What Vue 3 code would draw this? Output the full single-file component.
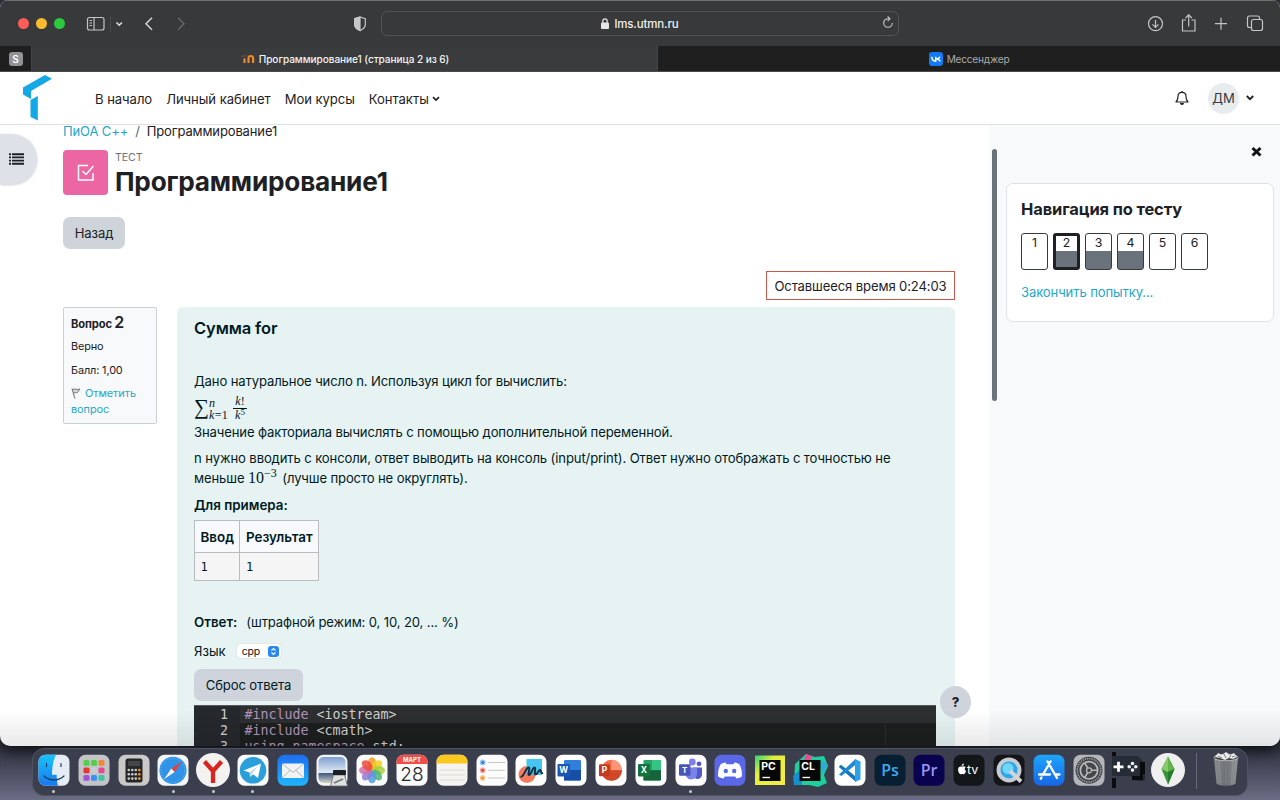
<script setup>
const menu = ['В начало', 'Личный кабинет', 'Мои курсы']
const questions = [
  { n: 1 }, { n: 2, done: true, current: true }, { n: 3, done: true },
  { n: 4, done: true }, { n: 5 }, { n: 6 },
]
const launchpad = ['#4fd04a', '#4fd04a', '#f0883a', '#e5352f', '#c9ccd2', '#e8478f', '#a04fd8', '#3f8ff0', '#3fc3a4']
const petals = ['#f59a23', '#f2d01f', '#a6cf3a', '#4fb37a', '#4f9fe0', '#8b7fd6', '#d46fb0', '#ee4b3a']
const running = ['finder', 'safari', 'yandex', 'telegram', 'teams']
const apps = ['finder', 'launchpad', 'calculator', 'safari', 'yandex', 'telegram', 'mail', 'preview', 'photos',
  'calendar', 'notes', 'reminders', 'freeform', 'word', 'powerpoint', 'excel', 'teams', 'discord', 'pycharm',
  'clion', 'vscode', 'photoshop', 'premiere', 'tv', 'quicktime', 'appstore', 'settings', 'controller', 'sims']
const base = {
  launchpad: '#c3c4c8', calculator: '#c9c9c7', safari: '#f4f5f6', telegram: '#fafafa', mail: 'url(#gMail)',
  photos: '#fbfbfb', calendar: '#fafafa', notes: '#f5f4f0', reminders: '#fcfcfc', freeform: '#fff', word: '#fff',
  powerpoint: '#fff', excel: '#fff', teams: '#fff', discord: '#5a68e8', vscode: '#fff', photoshop: '#071f33',
  premiere: '#08024f', tv: '#131719', quicktime: '#131517', appstore: 'url(#gStore)', settings: '#b4b5b8', preview: '#f3f4f6',
}
</script>

<template>
  <div class="desktop">
    <div class="window">
      <div class="toolbar">
        <div class="lights"><i class="red"></i><i class="yellow"></i><i class="green"></i></div>
        <svg class="bar-svg" width="130" height="24" viewBox="78 11 130 24" fill="none" stroke="#c3c4c5" stroke-width="1.2">
          <rect x="87.500" y="16.500" width="16.500" height="12.500" rx="2" />
          <path d="M94 16.500v12.500M89.500 19.500h2.500M89.500 22h2.500M89.500 24.500h2.500" />
          <path d="M110.500 15v16" stroke="#47494a" />
          <path d="M116.500 21.500l2.700 2.700 2.700-2.700" stroke="#e0e0e0" stroke-width="1.600" />
          <path d="M152 16.800l-6 6 6 6" stroke="#d5d6d6" stroke-width="1.500" />
          <path d="M178 16.800l6 6-6 6" stroke="#626466" stroke-width="1.500" />
        </svg>
        <svg class="shield" width="14" height="16" viewBox="0 0 14 16" fill="none" stroke="#c6c7c8" stroke-width="1.200">
          <path d="M7 1l5.300 1.600v5.900c0 3-2.500 4.800-5.300 6-2.800-1.200-5.300-3-5.300-6V2.600z" />
          <path d="M7 1L1.700 2.600v5.900c0 3 2.500 4.800 5.300 6z" fill="#c6c7c8" />
        </svg>
        <div class="address">
          <div class="host">
            <svg width="8" height="11" viewBox="0 0 8 11"><rect y="4.500" width="8" height="6.500" rx="1" fill="#e5e5e5" /><path d="M1.800 5V3a2.200 2.200 0 014.400 0v2" fill="none" stroke="#e5e5e5" stroke-width="1.200" /></svg>
            <span>lms.utmn.ru</span>
          </div>
          <svg class="reload" width="12" height="13" viewBox="0 0 12 13" fill="none" stroke="#c9caca" stroke-width="1.100"><path d="M7.500 2.700H6A4.300 4.300 0 1010.300 7" /><path d="M5.600.4l2.400 2.300-2.400 2.400" /></svg>
        </div>
        <svg class="tools" width="120" height="24" viewBox="1146 11 120 24" fill="none" stroke="#c3c4c5" stroke-width="1.200">
          <circle cx="1155.500" cy="22.700" r="7" /><path d="M1155.500 19v7M1152.500 23.300l3 3 3-3" />
          <path d="M1186 19h-3.500v11h12.500v-11h-3.500M1188.700 25.500v-11.500M1185.500 17l3.200-3.200 3.200 3.200" />
          <path d="M1215 22.700h12M1221 16.700v12" />
          <rect x="1251.500" y="18.500" width="11" height="11" rx="2" /><path d="M1251 26.500h-1.500a2 2 0 01-2-2v-7.500a2 2 0 012-2h8a2 2 0 012 2v1" />
        </svg>
      </div>

      <div class="tabs">
        <div class="pin"><span>S</span></div>
        <div class="tab active">
          <svg width="15" height="10" viewBox="0 0 15 10" fill="none"><path d="M4.500 9V4.500M8.500 9V4.300a2.300 2.300 0 014.600 0V9" stroke="#ef8a28" stroke-width="2.200" /><path d="M0 2.500L5.500.7l2 1.300-4.500 1.500" fill="#5b4a43" /></svg>
          <span>Программирование1 (страница 2 из 6)</span>
        </div>
        <div class="tab idle">
          <svg width="14" height="14" viewBox="0 0 14 14"><rect width="14" height="14" rx="3" fill="#1479f5" /><path d="M2.700 4.800c.3 3 1.700 4.500 4 4.500V4.800M11 4.800c-.7 1.500-1.800 2.200-3.600 2.200M8.200 7c1.300.2 2.300.9 3.100 2.400" fill="none" stroke="#fff" stroke-width="1.500" /></svg>
          <span>Мессенджер</span>
        </div>
      </div>

      <header class="site">
        <svg class="brand" width="30" height="46" viewBox="0 0 30 46" fill="#14a9e6"><path d="M0 12.500L22 0l7 3.800L8 16v8L0 19.500z" /><path d="M7.500 25L14.800 21v24.500L7.500 42z" /></svg>
        <nav>
          <a v-for="m in menu" :key="m">{{ m }}</a>
          <a>Контакты <svg width="8" height="6" viewBox="0 0 8 6"><path d="M1 1.200l3 2.800 3-2.800" fill="none" stroke="#1d2125" stroke-width="1.700" /></svg></a>
        </nav>
        <svg class="bell" width="14" height="15" viewBox="0 0 14 15"><path d="M7 1.400c2.500 0 4 1.800 4 4 0 3 .8 4.300 2 5.600H1c1.200-1.300 2-2.600 2-5.600 0-2.200 1.500-4 4-4z" fill="none" stroke="#1d2125" stroke-width="1.200" stroke-linejoin="round" /><path d="M7 0v1.500" stroke="#1d2125" stroke-width="1.300" /><path d="M5 12h4a2 2 0 01-4 0z" fill="#1d2125" /></svg>
        <div class="avatar">ДМ</div>
        <svg class="caret" width="8" height="6" viewBox="0 0 8 6"><path d="M.8 1l3.200 3.200L7.200 1" fill="none" stroke="#1d2125" stroke-width="1.800" /></svg>
      </header>

      <div class="page">
        <main>
          <div class="crumbs"><a>ПиОА C++</a><i>/</i><span>Программирование1</span></div>
          <div class="title">
            <div class="quiz">
              <svg width="20" height="20" viewBox="0 0 20 20" fill="none" stroke="#fff" stroke-width="1.500"><path d="M12 2.500H2.500v14.500h14.500v-7M6.500 8l3.500 3.500L17.500 3" /></svg>
            </div>
            <div><small>ТЕСТ</small><h1>Программирование1</h1></div>
          </div>
          <button class="back">Назад</button>
          <div class="timer"><span>Оставшееся время 0:24:03</span></div>
          <div class="question">
            <aside class="info">
              <h3>Вопрос <b>2</b></h3>
              <p class="state">Верно</p>
              <p class="grade">Балл: 1,00</p>
              <a><svg width="11" height="11" viewBox="0 0 11 11"><path d="M1 .7l3 10M1.200 1.500c2.500-1.300 4 .8 7.800-.4C7.500 2.500 7.500 3.500 6.500 4.500 5 5.200 4 4 2.200 5.500" fill="#d7d7d7" stroke="#6d7074" stroke-width="1" /></svg>Отметить вопрос</a>
            </aside>
            <section class="body">
              <h2>Сумма for</h2>
              <p class="task">Дано натуральное число n. Используя цикл for вычислить:</p>
              <div class="formula">
                <span class="sigma">∑</span>
                <span class="limits"><i>n</i><span><i>k</i>=1</span></span>
                <span class="frac"><span><i>k</i>!</span><span><i>k</i><sup>5</sup></span></span>
              </div>
              <p class="fact">Значение факториала вычислять с помощью дополнительной переменной.</p>
              <p class="io">n нужно вводить с консоли, ответ выводить на консоль (input/print). Ответ нужно отображать с точностью не<br>меньше <span class="pow">10<sup>−3</sup></span> (лучше просто не округлять).</p>
              <p class="example">Для примера:</p>
              <table>
                <thead><tr><th>Ввод</th><th>Результат</th></tr></thead>
                <tbody><tr><td>1</td><td>1</td></tr></tbody>
              </table>
              <p class="answer"><b>Ответ:</b><span>(штрафной режим: 0, 10, 20, ... %)</span></p>
              <div class="lang"><span>Язык</span>
                <div class="select">cpp<svg width="11" height="11" viewBox="0 0 11 11"><rect width="11" height="11" rx="3" fill="#2588ee" /><path d="M3.500 4.500l2-2 2 2M3.500 6.500l2 2 2-2" fill="none" stroke="#fff" stroke-width="1.100" /></svg></div>
              </div>
              <button class="reset">Сброс ответа</button>
              <div class="code">
                <div class="gutter"><span>1</span><span>2</span><span>3</span></div>
                <div class="lines">
                  <div class="now"><em>#include</em> &lt;iostream&gt;</div>
                  <div><em>#include</em> &lt;cmath&gt;</div>
                  <div><em>using</em> <em>namespace</em> std;</div>
                </div>
              </div>
            </section>
          </div>
        </main>
        <aside class="drawer">
          <div class="scroll"></div>
          <div class="panel">
            <svg class="close" width="11" height="11" viewBox="0 0 11 11"><path d="M1.500 2l8 7.500M9.500 2l-8 7.500" stroke="#111417" stroke-width="3" /></svg>
            <div class="card">
              <h2>Навигация по тесту</h2>
              <div class="nums"><span v-for="q in questions" :key="q.n" :class="{ done: q.done, current: q.current }">{{ q.n }}</span></div>
              <a>Закончить попытку...</a>
            </div>
          </div>
        </aside>
        <div class="toggler"><svg width="15" height="12" viewBox="0 0 15 12" stroke="#1d2125" stroke-width="1.900"><path d="M0 1.200h2M3 1.200h12M0 4.400h2M3 4.400h12M0 7.600h2M3 7.600h12M0 10.800h2M3 10.800h12" /></svg></div>
        <div class="help">?</div>
        <div class="fade"></div>
      </div>
    </div>

    <div class="dock">
      <svg class="defs" width="0" height="0">
        <defs>
          <linearGradient id="gMail" x2="0" y2="1"><stop stop-color="#1d6df0" /><stop offset="1" stop-color="#1fb6fb" /></linearGradient>
          <linearGradient id="gStore" x2="0" y2="1"><stop stop-color="#1ea5f8" /><stop offset="1" stop-color="#1666e8" /></linearGradient>
          <linearGradient id="gFinder" x2="0" y2="1"><stop stop-color="#19c3fc" /><stop offset="1" stop-color="#1878ee" /></linearGradient>
          <linearGradient id="gPc" x2="1" y2="1"><stop stop-color="#2ad37c" /><stop offset=".35" stop-color="#e2ee3a" /><stop offset="1" stop-color="#f3ee45" /></linearGradient>
          <linearGradient id="gSky" x2="0" y2="1"><stop stop-color="#7d9fd0" /><stop offset=".6" stop-color="#e2eaf3" /><stop offset=".61" stop-color="#33557f" /><stop offset="1" stop-color="#d9d4c8" /></linearGradient>
          <linearGradient id="gTrash"><stop stop-color="#8a8d8f" /><stop offset=".5" stop-color="#6d7072" /><stop offset="1" stop-color="#96999a" /></linearGradient>
        </defs>
      </svg>
      <div v-for="a in apps" :key="a" class="slot">
        <svg width="40" height="40" viewBox="0 0 40 40">
          <rect v-if="base[a]" x="4.500" y="4.800" width="31" height="31" rx="7" :fill="base[a]" />
          <g v-if="a === 'finder'">
            <rect x="4.500" y="4.800" width="31" height="31" rx="7" fill="#e6ecf5" />
            <path d="M22 4.800H11.500a7 7 0 00-7 7v17a7 7 0 007 7H24c-1-3.500-1.300-7-1.300-11H18C18 17 19.500 9.500 22 4.800z" fill="url(#gFinder)" />
            <path d="M12.500 13.500v3M27 13.500v3M10 26c5.500 5.300 14.500 5.300 20 0" fill="none" stroke="#1c3a5c" stroke-width="1.200" stroke-linecap="round" />
          </g>
          <g v-else-if="a === 'launchpad'"><rect v-for="(c, i) in launchpad" :key="i" :x="9.500 + (i % 3) * 7.500" :y="10 + Math.floor(i / 3) * 7.500" width="6" height="5.700" rx="1.500" :fill="c" /></g>
          <g v-else-if="a === 'calculator'">
            <rect x="11.500" y="8.500" width="17" height="24" rx="2.500" fill="#262729" /><rect x="14" y="11" width="12" height="5" fill="#45484a" />
            <circle v-for="i in 12" :key="i" :cx="14.800 + ((i - 1) % 4) * 3.500" :cy="20 + Math.floor((i - 1) / 4) * 4.300" r="1.300" :fill="i % 4 ? '#c9cacb' : '#f59a23'" />
          </g>
          <g v-else-if="a === 'safari'"><circle cx="20" cy="20.300" r="13.600" fill="#2f93e8" /><circle cx="20" cy="20.300" r="12" fill="none" stroke="#a8d2f6" stroke-width="1" stroke-dasharray=".5 1.500" /><path d="M29 11.500l-7.300 10.500-3.400-3.500z" fill="#e8403a" /><path d="M11 29.300l7.300-10.800 3.400 3.500z" fill="#f2f3f4" /></g>
          <g v-else-if="a === 'yandex'"><circle cx="20" cy="20" r="17" fill="#f4f2f1" /><path d="M11.500 11.500l8.500 9.500 8.500-9.500M20 20.500V33" fill="none" stroke="#d8261e" stroke-width="4.300" /></g>
          <g v-else-if="a === 'telegram'"><circle cx="20" cy="20.300" r="13.300" fill="#2a9fda" /><path d="M10.500 20.500l17.500-7-3 14.500-5-3.700-2.800 2.700-.5-4.500z" fill="#fff" /><path d="M16.500 22.500L25 16l-6 7.500-2 3.500z" fill="#b9d8ea" /></g>
          <g v-else-if="a === 'mail'"><rect x="9" y="13.500" width="22" height="14.500" rx="1.500" fill="#f1f3f5" /><path d="M9.500 14l10.500 8.500L30.500 14M9.500 27.500l8-7.500M30.500 27.500l-8-7.500" fill="none" stroke="#b2b8bf" stroke-width="1" /></g>
          <g v-else-if="a === 'preview'"><rect x="6.500" y="7" width="27" height="26" rx="5" fill="url(#gSky)" /><path d="M21.500 25h11l3 11H18.500z" fill="#dfe1e1" stroke="#6b6d6e" stroke-width=".8" /><rect x="21" y="20" width="13" height="5" rx="1" fill="#1d2022" /><path d="M22 33l9-4" stroke="#777" stroke-width="1.800" /></g>
          <g v-else-if="a === 'photos'"><ellipse v-for="(c, i) in petals" :key="i" cx="20" cy="13.600" rx="4.300" ry="6.300" :fill="c" fill-opacity=".85" :transform="`rotate(${i * 45} 20 20.300)`" /></g>
          <g v-else-if="a === 'calendar'"><path d="M4.500 14v-2.200a7 7 0 017-7h17a7 7 0 017 7V14z" fill="#f04e46" /><text x="20" y="12.300" class="mid" font-size="6" font-weight="700" fill="#fff">МАРТ</text><text x="20" y="31" class="mid" font-size="19" font-weight="300" fill="#252729">28</text></g>
          <g v-else-if="a === 'notes'"><path d="M4.500 13.500v-1.700a7 7 0 017-7h17a7 7 0 017 7v1.700z" fill="#f9c91e" /><path d="M7 20h26M7 25h26M7 30h26" stroke="#d6d4ce" stroke-width=".8" /></g>
          <g v-else-if="a === 'reminders'"><path d="M16 12.500h17M16 20.300h17M16 28h17" stroke="#c5c7c9" stroke-width="1" /><g fill="none" stroke-width="1"><circle cx="10.700" cy="12.500" r="2.500" stroke="#82b8ec" /><circle cx="10.700" cy="20.300" r="2.500" stroke="#f29b93" /><circle cx="10.700" cy="28" r="2.500" stroke="#f5c387" /></g><circle cx="10.700" cy="12.500" r="1.700" fill="#2682e0" /><circle cx="10.700" cy="20.300" r="1.700" fill="#e5443b" /><circle cx="10.700" cy="28" r="1.700" fill="#f29329" /></g>
          <g v-else-if="a === 'freeform'"><circle cx="16" cy="24.500" r="8.500" fill="#f67a60" /><rect x="15.500" y="9" width="15.500" height="16" fill="#44c6f1" /><path d="M9.500 27c3.500 0 5.500-9.500 8-9.500s-1.500 7.500.5 7.500 3.500-7.500 5.500-7.500-1 7 1 7 3-4.500 4.500-4.500.5 4 3 3" fill="none" stroke="#112c3d" stroke-width="1.900" /></g>
          <g v-else-if="a === 'word'"><rect x="13" y="10" width="17" height="20.500" rx="1.300" fill="#2f7fdb" /><path d="M13 20h17v9.200a1.300 1.300 0 01-1.300 1.300H13z" fill="#174fa8" /><rect x="6.500" y="14" width="12.500" height="12.500" rx="1.200" fill="#1a57b5" /><text x="12.700" y="23.200" class="mid" font-size="8.500" font-weight="700" fill="#fff">W</text></g>
          <g v-else-if="a === 'powerpoint'"><circle cx="20.500" cy="20.300" r="10.500" fill="#ed6c47" /><path d="M20.500 9.800a10.500 10.500 0 0110.500 10.500H20.500z" fill="#ff9574" /><path d="M10 20.300h21a10.500 10.500 0 01-21 0z" fill="#d0482a" /><rect x="8" y="14.300" width="11" height="12" rx="1.200" fill="#c23c1d" /><text x="13.500" y="23.300" class="mid" font-size="8.500" font-weight="700" fill="#fff">P</text></g>
          <g v-else-if="a === 'excel'"><rect x="12.500" y="10" width="17.500" height="20.500" rx="1.300" fill="#23a366" /><path d="M21 10h7.700a1.300 1.300 0 011.300 1.300V20h-9z" fill="#35c481" /><path d="M12.500 20.300H30v8.900a1.300 1.300 0 01-1.300 1.300H12.500z" fill="#17643a" /><rect x="7" y="14" width="12" height="12.500" rx="1.200" fill="#13723f" /><text x="13" y="23.200" class="mid" font-size="8.500" font-weight="700" fill="#fff">X</text></g>
          <g v-else-if="a === 'teams'"><circle cx="21.300" cy="12" r="3.400" fill="#7a80e8" /><circle cx="28" cy="13.800" r="2.400" fill="#5059c9" /><path d="M22 17.500h9v6.500a4.500 4.500 0 01-9 1z" fill="#5059c9" /><path d="M15 17.500h11v7a6 6 0 01-11 2z" fill="#7b83eb" /><rect x="8" y="14.300" width="11.500" height="11.500" rx="1.200" fill="#4b53bc" /><text x="13.700" y="23" class="mid" font-size="8" font-weight="700" fill="#fff">T</text></g>
          <g v-else-if="a === 'discord'"><path d="M15.500 12.500c-2 .3-3.800 1-5 1.900C8.500 18 7.800 22 8 26.200c1.800 1.400 3.600 2 5.500 2.300l1.300-2h10.400l1.300 2c1.900-.3 3.700-.9 5.500-2.300.2-4.200-.5-8.200-2.500-11.800-1.200-.9-3-1.600-5-1.900l-1 1.700h-7z" fill="#fff" /><circle cx="15.800" cy="21" r="2.200" fill="#5a68e8" /><circle cx="24.200" cy="21" r="2.200" fill="#5a68e8" /></g>
          <g v-else-if="a === 'pycharm'"><rect x="5" y="5.500" width="30" height="29.500" fill="url(#gPc)" /><rect x="9.500" y="10" width="21" height="21" fill="#070707" /><text x="11.300" y="20" font-size="10.500" font-weight="700" fill="#fff">PC</text><path d="M12.500 27.500h7.500" stroke="#fff" stroke-width="1.400" /></g>
          <g v-else-if="a === 'clion'"><path d="M5 14l11-10 9 3 9-1 4 10-4 9 3 8-9 4-9-2-15 0z" fill="#1fce9d" /><path d="M16 4l7 3-5 5-4-2z" fill="#ee4a94" /><path d="M3 26l9-8v17H4z" fill="#168fce" /><path d="M30 10l8 5-6 8z" fill="#34a7db" /><rect x="9.500" y="10" width="21" height="21" fill="#070707" /><text x="11.300" y="20" font-size="10.500" font-weight="700" fill="#fff">CL</text><path d="M12.500 27.500h7.500" stroke="#fff" stroke-width="1.400" /></g>
          <g v-else-if="a === 'vscode'"><path d="M9 16.300l2-1.500 15 12V32L9.500 17.500z" fill="#1476bd" /><path d="M9 24.500L25.500 9l1 5-15 12z" fill="#1c8ad3" /><path d="M25 9l5.500 2.500v18L25 32z" fill="#2ba1e8" /></g>
          <text v-else-if="a === 'photoshop'" x="20" y="25.500" class="mid adobe" font-size="16" font-weight="600" fill="#3fa9f3">Ps</text>
          <text v-else-if="a === 'premiere'" x="20" y="25.500" class="mid adobe" font-size="16" font-weight="600" fill="#9b93f7">Pr</text>
          <g v-else-if="a === 'tv'"><path d="M13 16.800c1-1 3-.7 3.700.3-1.500 1.200-1.200 3.300.4 4-.7 2.200-1.700 3.500-2.800 3.200-.9-.3-1.200-.3-2 0-1.800.4-3.600-3.100-3.200-5.300.4-2.300 2.300-3 3.900-2.200zM12.700 16c0-1.400.9-2.300 2.200-2.500.1 1.500-.9 2.500-2.200 2.500z" fill="#fff" /><text x="18" y="24.300" font-size="12.500" font-weight="400" fill="#fff">tv</text></g>
          <g v-else-if="a === 'quicktime'"><circle cx="20" cy="20" r="10.500" fill="#2ca7e8" stroke="#c7ccd2" stroke-width="4" /><circle cx="19" cy="18.500" r="5.500" fill="#73d6f8" /><path d="M21 21l11 10.500" stroke="#d2d5da" stroke-width="4" /></g>
          <g v-else-if="a === 'appstore'" stroke="#fff" stroke-width="2.300" stroke-linecap="round"><path d="M21.500 11.500L14 24.500M18.500 11.500L28 28M10 24.500h11M27 24.500h3.500M12.500 27.500l-.7 1.200" /></g>
          <g v-else-if="a === 'settings'" fill="none"><circle cx="20" cy="20.300" r="13.500" fill="#444649" /><circle cx="20" cy="20.300" r="11.700" stroke="#a6a8aa" stroke-width="1.500" stroke-dasharray="1.200 1" /><circle cx="20" cy="20.300" r="8.700" stroke="#b7b9ba" stroke-width="1.700" /><circle cx="20" cy="20.300" r="2.500" stroke="#b7b9ba" stroke-width="1.300" /><path d="M22.500 20.300h6M18.700 18l-3-5.200M18.700 22.500l-3 5.200" stroke="#b7b9ba" stroke-width="1.600" /></g>
          <g v-else-if="a === 'controller'"><path d="M4 6h24c5 0 5 6 9 6v19h-7c-6 0-3-4-8-5H4z" fill="#262c36" /><path d="M4 2h4v4H4zM4 28h4v10H4zM32 12h5v12h-2v6H24v-4h8z" fill="#090b0d" /><path d="M5.500 16.800h10M10.500 11.800v10" stroke="#fff" stroke-width="2.800" /><g fill="#eef1f4"><circle cx="24.500" cy="13.500" r="1.800" /><circle cx="24.500" cy="20.100" r="1.800" /><circle cx="21.200" cy="16.800" r="1.800" /><circle cx="27.800" cy="16.800" r="1.800" /></g></g>
          <g v-else-if="a === 'sims'"><circle cx="20" cy="20" r="17" fill="#eeefee" /><path d="M20 6.500l6.500 12.500L20 34.500 13.500 19z" fill="#39963b" /><path d="M20 6.500V22l-6.500-3z" fill="#8bc96a" /><path d="M20 6.500V22l6.500-3z" fill="#63b34e" /><path d="M20 22v12.500L26.500 19z" fill="#247c2d" /></g>
        </svg>
        <i v-if="running.includes(a)"></i>
      </div>
      <div class="divider"></div>
      <svg class="trash" width="30" height="38" viewBox="0 0 30 38"><path d="M3 7h24l-2.500 25.500c-2 3-17 3-19 0z" fill="url(#gTrash)" /><path d="M8 10l1.500 22M15 11v22M22 10l-1.500 22" stroke="#a1a4a6" stroke-width=".7" opacity=".6" /><ellipse cx="15" cy="6.500" rx="12" ry="3.300" fill="#3d4042" stroke="#b9bbbc" /><path d="M4 6l3-4 4 2 4-3 4 3 4-2 3 4-4 2-4-1-4 2-5-2z" fill="#e9eaea" /><path d="M7 5l4 2M13 3l2 4M20 4l-2 3M24 5l-3 1" stroke="#6c6f70" stroke-width=".9" /></svg>
    </div>
  </div>
</template>

<style>
body { margin: 0; overflow: hidden; }
</style>

<style scoped>
* { box-sizing: border-box; }
h1, h2, h3, p { margin: 0; }
svg { display: block; flex: none; }
.desktop { width: 1280px; height: 800px; overflow: hidden; display: flex; flex-direction: column; background: linear-gradient(#30333f 0, #30333f 740px, #363a49 755px, #6b6d84 800px); font-family: Inter, "Liberation Sans", sans-serif; color: #1d2125; font-size: 13.100px; letter-spacing: -.13px; }
.window { height: 746px; flex: none; display: flex; flex-direction: column; background: #fff; border-radius: 8px 8px 10px 10px; overflow: hidden; box-shadow: 0 4px 14px #000c; }
.toolbar { height: 46px; flex: none; background: #38393a; border-top: 1px solid #6c6e6f; display: flex; align-items: center; }
.lights { display: flex; gap: 7px; margin-left: 18px; width: 60px; }
.lights i { width: 11px; height: 11px; border-radius: 50%; }
.red { background: #fc5e57; } .yellow { background: #fbbb2e; } .green { background: #2bc840; }
.shield { margin-left: 145px; }
.address { width: 518px; height: 25px; margin-left: 14px; border: 1px solid #505254; border-radius: 6px; display: flex; align-items: center; justify-content: center; color: #f0f0f0; font-size: 11.500px; font-weight: 500; position: relative; }
.host { display: flex; gap: 5px; align-items: center; }
.reload { position: absolute; right: 4px; top: 4px; }
.tools { margin-left: auto; margin-right: 14px; }
.tabs { height: 26px; flex: none; display: flex; background: #1f1f1f; font-size: 10.100px; letter-spacing: -.07px; border-bottom: 1px solid #4a4a4a; }
.pin { width: 32px; display: flex; align-items: center; justify-content: center; border-right: 1px solid #444; }
.pin span { width: 14px; height: 14px; border-radius: 3px; background: #919296; color: #fff; font-weight: 600; font-size: 10px; line-height: 14px; text-align: center; }
.tab { display: flex; align-items: center; justify-content: center; gap: 4px; padding-top: 1px; }
.active { width: 625px; background: #393b3d; color: #f3f3f3; font-weight: 500; }
.idle { flex: 1; color: #aaa; border-left: 1px solid #444; letter-spacing: -.2px; }
.site { height: 53px; flex: none; border-bottom: 1px solid #dfe1e4; display: flex; align-items: center; background: #fff; }
.brand { margin-left: 23px; margin-top: -1px; }
nav { display: flex; gap: 14px; margin: 1px 0 0 42px; font-size: 13.100px; letter-spacing: -.06px; }
nav a { display: flex; align-items: center; gap: 3px; white-space: nowrap; }
.bell { margin-left: auto; }
.avatar { width: 31px; height: 31px; border-radius: 50%; background: #e9ecef; margin: 0 7px 0 19px; line-height: 31px; text-align: center; color: #343a40; }
.caret { margin-right: 26px; }
.page { flex: 1; min-height: 0; display: flex; position: relative; overflow: hidden; }
main { width: 989px; flex: none; padding: 0 34px 0 63px; }
.crumbs { height: 13px; line-height: 12px; display: flex; font-size: 13px; }
.crumbs a, .info a, .card a { color: #24a7c9; }
.crumbs i { font-style: normal; color: #60676d; margin: 0 7px; }
.title { display: flex; gap: 7px; margin-top: 12px; height: 45px; }
.quiz { width: 45px; height: 45px; border-radius: 4px; background: #eb66a2; display: flex; align-items: center; justify-content: center; }
.title small { display: block; font-size: 10.700px; line-height: 15px; color: #6a737b; }
h1 { font-size: 26.200px; line-height: 33px; font-weight: 700; white-space: nowrap; letter-spacing: -.22px; }
button { border: 0; font: inherit; letter-spacing: inherit; color: inherit; background: #ced4da; border-radius: 7px; display: block; padding: 0; text-align: center; line-height: 32px; height: 32px; }
.back { width: 62px; margin-top: 22px; }
.timer { display: flex; justify-content: flex-end; margin-top: 22px; }
.timer span { width: 189px; height: 29px; border: 1px solid #c9584b; line-height: 28px; text-align: center; white-space: nowrap; }
.question { display: flex; gap: 20px; margin-top: 7px; align-items: flex-start; }
.info { width: 94px; height: 117px; border: 1px solid #cad0d7; border-radius: 2px; background: #f8f9fa; padding: 5px 7px; font-size: 10.900px; line-height: 16px; }
.info h3 { font-size: 11.200px; line-height: 18px; font-weight: 700; }
.info h3 b { font-size: 16px; line-height: 18px; font-weight: 600; }
.state { margin-top: 5px; } .grade { margin-top: 8px; }
.info a { display: block; margin-top: 7px; letter-spacing: -.05px; }
.info a svg { display: inline-block; margin-right: 3px; vertical-align: -2px; }
.body { width: 778px; height: 445px; background: #e7f3f3; border-radius: 6px 6px 0 0; padding: 11px 18px 0 17px; color: #001a1e; }
.body h2 { font-size: 16.500px; line-height: 20px; font-weight: 600; }
.body p { line-height: 20px; white-space: nowrap; }
.task { margin-top: 33px; }
.formula { height: 31px; display: flex; align-items: center; font-family: "Liberation Serif", serif; padding-top: 4px; letter-spacing: 0; }
.sigma { font-size: 21px; line-height: 24px; width: 15px; margin-top: -3px; }
.limits { display: flex; flex-direction: column; font-size: 12px; line-height: 12px; letter-spacing: .3px; }
.frac { display: flex; flex-direction: column; margin-left: 5px; font-size: 12px; line-height: 13px; text-align: center; width: 14px; margin-top: -1px; }
.frac > span:first-child { border-bottom: 1px solid #001a1e; }
.frac sup { font-size: 9px; line-height: 0; vertical-align: 4px; }
.io { margin-top: 6px; }
.pow { font-family: "Liberation Serif", serif; font-size: 16px; line-height: 1; margin-right: 2px; letter-spacing: 0; }
.pow sup { font-size: 12px; line-height: 0; vertical-align: 6px; }
.body .example { margin-top: 7px; font-weight: 600; font-size: 13.330px; letter-spacing: 0; }
table { border-collapse: collapse; margin-top: 5px; letter-spacing: 0; font-size: 13.400px; }
th, td { border: 1px solid #b9bdc0; padding: 0 5.500px; text-align: left; }
th { height: 32px; background: #f8f9fd; font-weight: 600; }
td { height: 28px; background: #f5f5f5; font-family: "DejaVu Sans Mono", monospace; font-size: 12px; }
.answer { margin-top: 31px; } .answer b { font-weight: 600; margin-right: 9px; font-size: 13.330px; letter-spacing: 0; }
.lang { display: flex; align-items: center; gap: 11px; height: 16px; margin-top: 11px; }
.lang > span { letter-spacing: 0; }
.select { width: 44px; height: 14px; background: #fff; border-radius: 3px; font-size: 10.500px; display: flex; justify-content: space-between; align-items: center; padding: 0 2px 0 5px; box-shadow: 0 0 1px #0005; color: #111; }
.reset { width: 109px; margin-top: 10px; background: #ced3dc; }
.code { margin-top: 4px; width: 742px; height: 80px; background: #1d1f1f; border-top: 1px solid #565a5a; display: flex; font: 13.300px/16px "DejaVu Sans Mono", monospace; letter-spacing: 0; color: #d0d0ce; }
.gutter { width: 46px; background: #25282c; display: flex; flex-direction: column; padding: 1px 12px 0 0; text-align: right; }
.lines { flex: 1; white-space: pre; background: linear-gradient(90deg, transparent 645px, #2b2d2d 645px, #2b2d2d 646px, transparent 646px); }
.lines > div { padding-left: 4.500px; }
.lines em { font-style: normal; color: #b294bb; }
.lines .now { background: #2c2e30; padding-top: 1px; }
.drawer { flex: 1; background: #f8f9fb; display: flex; padding-left: 3px; }
.scroll { width: 5px; height: 252px; border-radius: 3px; background: #6a737b; margin-top: 24px; }
.panel { flex: 1; padding-left: 9px; }
.close { margin: 21px 0 0 245px; }
.card { width: 268px; height: 139px; margin-top: 26px; border: 1px solid #dfe2e6; border-radius: 7px; background: #fff; padding: 14px; }
.card h2 { font-size: 16.500px; line-height: 22px; font-weight: 700; white-space: nowrap; }
.nums { display: flex; gap: 5px; margin: 13px 0 12px; }
.nums span { width: 27px; height: 37px; border: 1px solid #343a40; border-radius: 3px; text-align: center; line-height: 18px; font-size: 12.300px; }
.nums .done { background: linear-gradient(#fff 17px, #6a737b 17px); }
.nums .current { border: 3px solid #1d2125; line-height: 14px; background: linear-gradient(#fff 15px, #6a737b 15px); }
.card a { display: block; line-height: 20px; white-space: nowrap; }
.toggler { position: absolute; left: 0; top: 9px; width: 37px; height: 50px; border-radius: 0 25px 25px 0; background: #dee2e8; box-shadow: 0 1px 3px #0003; display: flex; align-items: center; padding-left: 9px; }
.help { position: absolute; left: 940px; top: 561px; width: 31px; height: 32px; border-radius: 50%; background: #ced3dc; text-align: center; line-height: 32px; font-weight: 800; }
.fade { position: absolute; left: 0; right: 0; bottom: 0; height: 36px; background: linear-gradient(#0000, #00000016); }
.dock { width: 1216px; height: 48px; flex: none; margin: 2px 0 0 32px; border-radius: 12px; background: #3b3e4c; border: 1px solid #505361; display: flex; position: relative; padding: 1px 0 0 1px; letter-spacing: 0; }
.defs { position: absolute; }
.slot { width: 39.800px; flex: none; display: flex; flex-direction: column; align-items: center; }
.slot i { width: 3px; height: 3px; border-radius: 50%; background: #c9cbd4; }
.mid { text-anchor: middle; }
.adobe { font-family: "Open Sans", sans-serif; }
.divider { width: 1px; height: 36px; background: #676a76; margin: 3px 0 0 8px; }
.trash { margin: 1px 0 0 14px; }
</style>
